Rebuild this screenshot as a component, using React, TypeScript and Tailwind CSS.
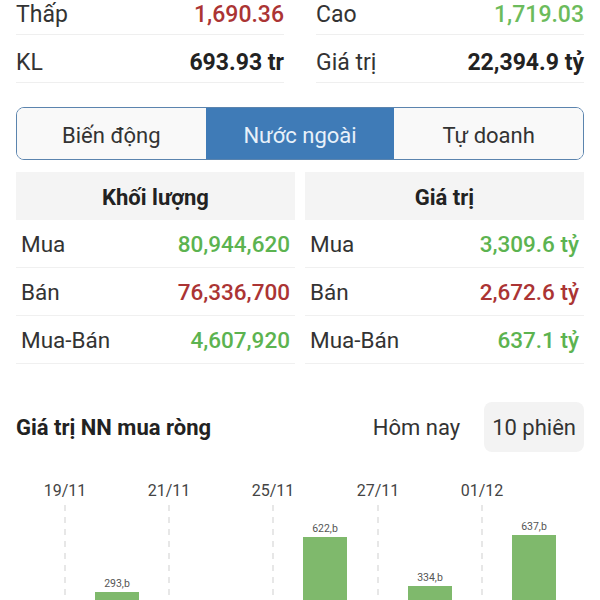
import { useState } from "react"

const green = "text-[#5cb350]"
const red = "text-[#ab3434]"

const summary = [
  { label: "Thấp", value: "1,690.36", cls: `${red} font-medium` },
  { label: "Cao", value: "1,719.03", cls: "text-[#6cbb5c] font-medium" },
  { label: "KL", value: "693.93 tr", cls: "text-[#222] font-bold" },
  { label: "Giá trị", value: "22,394.9 tỷ", cls: "text-[#222] font-bold" },
]

const tables = [
  {
    title: "Khối lượng",
    rows: [
      { label: "Mua", value: "80,944,620", cls: green },
      { label: "Bán", value: "76,336,700", cls: red },
      { label: "Mua-Bán", value: "4,607,920", cls: green },
    ],
  },
  {
    title: "Giá trị",
    rows: [
      { label: "Mua", value: "3,309.6 tỷ", cls: green },
      { label: "Bán", value: "2,672.6 tỷ", cls: red },
      { label: "Mua-Bán", value: "637.1 tỷ", cls: green },
    ],
  },
]

const dates = [
  { x: 65, label: "19/11" },
  { x: 169, label: "21/11" },
  { x: 273, label: "25/11" },
  { x: 378, label: "27/11" },
  { x: 482, label: "01/12" },
]

// bar tops are relative to the chart's own top (page y 452)
const bars = [
  { x: 117, top: 140, label: "293,b" },
  { x: 325, top: 85, label: "622,b" },
  { x: 430, top: 134, label: "334,b" },
  { x: 534, top: 83, label: "637,b" },
]

const tabs = ["Biến động", "Nước ngoài", "Tự doanh"]

function NetChart() {
  return (
    <svg width="600" height="148" viewBox="0 0 600 148" className="block">
      {dates.map((d) => (
        <g key={d.label}>
          <text x={d.x} y={44} textAnchor="middle" fontSize="16" fill="#444" fontFamily="Roboto, sans-serif">
            {d.label}
          </text>
          <line x1={d.x} y1={53} x2={d.x} y2={148} stroke="#cfcfcf" strokeWidth="1" strokeDasharray="6 6" />
        </g>
      ))}
      {bars.map((b) => (
        <g key={b.label}>
          <rect x={b.x - 22} y={b.top} width={44} height={148 - b.top} fill="#7fb96c" />
          <text x={b.x} y={b.top - 5} textAnchor="middle" fontSize="10.5" fill="#555" fontFamily="Roboto, sans-serif">
            {b.label}
          </text>
        </g>
      ))}
    </svg>
  )
}

export default function App() {
  const [tab, setTab] = useState(1)
  const [range, setRange] = useState<"today" | "10">("10")

  return (
    <div className="w-[600px] h-[600px] overflow-hidden bg-white font-['Roboto',sans-serif] text-[#333]">
      <div className="-mt-[13px] grid grid-cols-2 gap-x-8 px-4">
        {summary.map((s) => (
          <div key={s.label} className="h-12 pt-[9px] flex items-center justify-between border-b border-[#efefef] text-[23px]">
            <span>{s.label}</span>
            <span className={s.cls}>{s.value}</span>
          </div>
        ))}
      </div>

      <div className="mx-4 mt-6 h-[53px] flex rounded-lg border-[1.5px] border-[#5b84ae] overflow-hidden">
        {tabs.map((t, i) => (
          <button
            key={t}
            onClick={() => setTab(i)}
            className={`flex-1 flex items-center justify-center pt-[3px] text-[22px] ${
              tab === i ? "bg-[#3f7bb7] text-[#e8f1fa]" : "bg-[#f9f9f9] text-[#333]"
            }`}
          >
            {t}
          </button>
        ))}
      </div>

      <div className="mt-3 grid grid-cols-2 gap-[10px] px-4">
        {tables.map((tb) => (
          <div key={tb.title}>
            <div className="h-12 pt-[2px] bg-[#f4f4f4] flex items-center justify-center font-bold text-[22px] text-[#222]">
              {tb.title}
            </div>
            {tb.rows.map((r) => (
              <div key={r.label} className="h-12 px-[5px] pt-[2px] flex items-center justify-between border-b border-[#f0f0f0] text-[22.5px]">
                <span>{r.label}</span>
                <span className={`${r.cls} font-medium`}>{r.value}</span>
              </div>
            ))}
          </div>
        ))}
      </div>

      <div className="mt-[38px] h-[50px] flex items-center justify-between px-4">
        <h2 className="font-bold text-[22px] text-[#222]">Giá trị NN mua ròng</h2>
        <div className="flex items-center gap-4 text-[22px]">
          <button
            onClick={() => setRange("today")}
            className={`h-[50px] px-2 rounded-lg ${range === "today" ? "bg-[#f3f3f3]" : ""}`}
          >
            Hôm nay
          </button>
          <button
            onClick={() => setRange("10")}
            className={`h-[50px] px-2 rounded-lg ${range === "10" ? "bg-[#f3f3f3]" : ""}`}
          >
            10 phiên
          </button>
        </div>
      </div>

      <NetChart />
    </div>
  )
}
